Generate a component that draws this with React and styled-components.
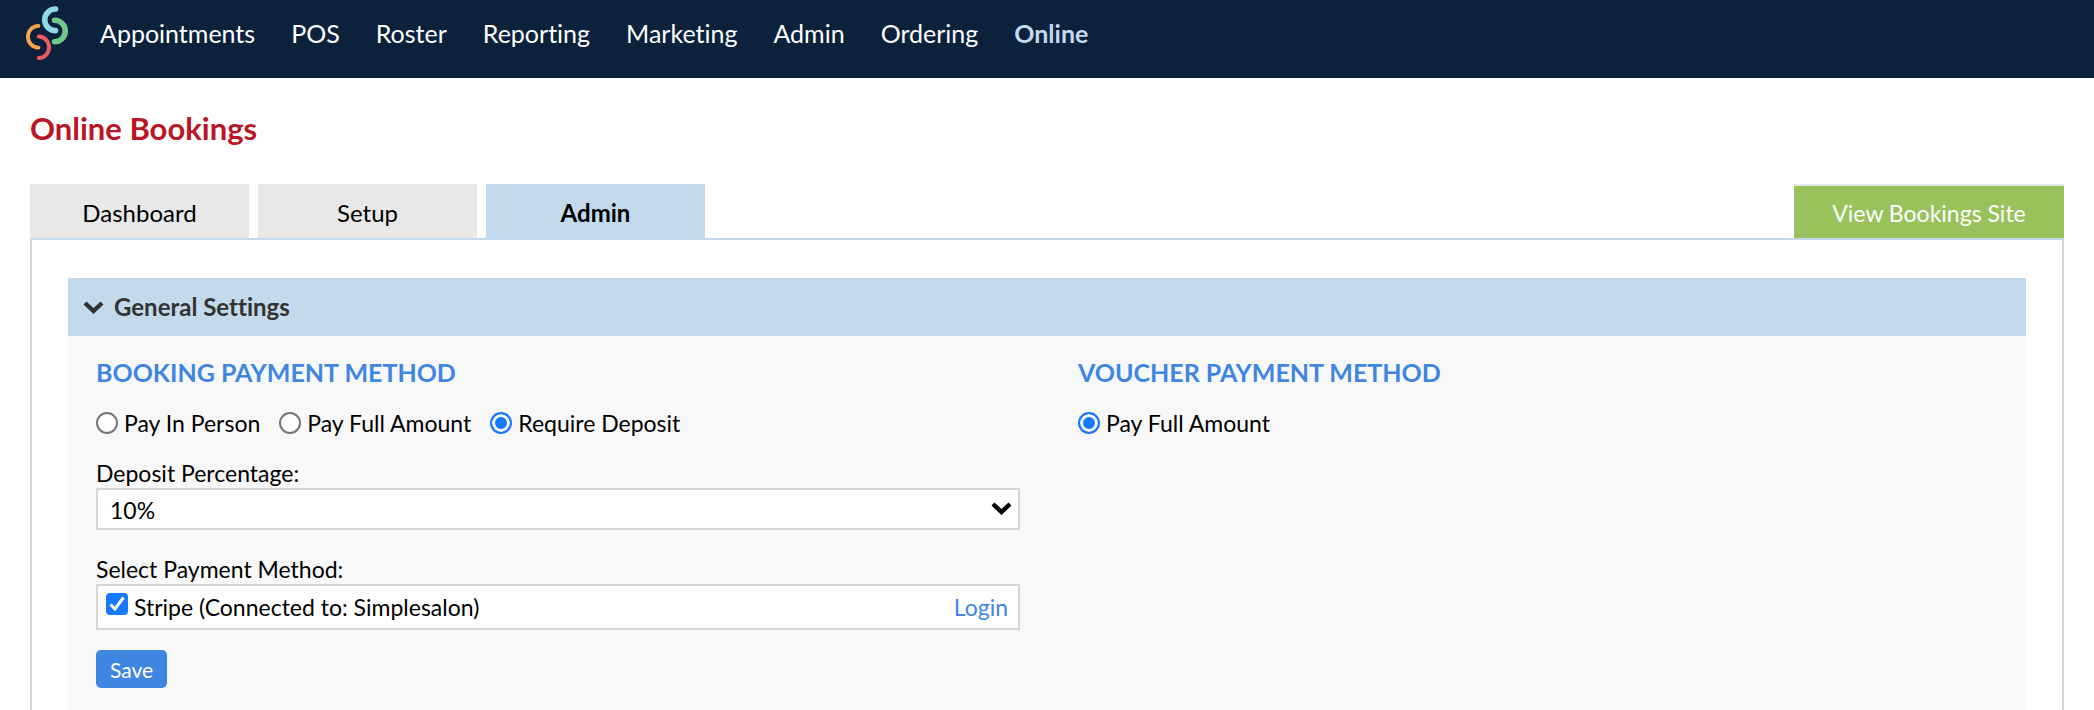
import React, { useState } from "react";
import styled, { createGlobalStyle } from "styled-components";

const GlobalStyle = createGlobalStyle`
  * {
    box-sizing: border-box;
  }
  body {
    margin: 0;
    background: #fff;
    color: #000;
    font-family: Lato, "Liberation Sans", sans-serif;
    font-size: 23px;
    font-variant-ligatures: none;
    line-height: 28px;
  }
`;

const Header = styled.header`
  display: flex;
  align-items: flex-start;
  gap: 31px;
  height: 78px;
  padding: 6px 26px;
  background: #0c223c;
`;

const LogoLink = styled.a`
  display: block;
  height: 54px;
`;

const Nav = styled.nav`
  display: flex;
  gap: 36px;
  padding-top: 11px;
`;

const NavLink = styled.a`
  color: ${({ $active }) => ($active ? "#c3daed" : "#fff")};
  font-size: 25px;
  font-weight: ${({ $active }) => ($active ? 700 : 400)};
  line-height: 32px;
  text-decoration: none;
`;

const Page = styled.main`
  padding: 30px 30px 0;
`;

const Title = styled.h1`
  margin: 0 0 36px;
  color: #bb1626;
  font-size: 31px;
  font-weight: 700;
  line-height: 40px;
`;

const TabBar = styled.div`
  display: flex;
  justify-content: space-between;
  border-bottom: 2px solid #c3daed;
`;

const Tabs = styled.div`
  display: flex;
  gap: 9px;
`;

const Tab = styled.button`
  width: 219px;
  height: 54px;
  padding: 4px 0 0;
  border: 0;
  background: ${({ $active }) => ($active ? "#c3daed" : "#e8e8e8")};
  color: #000;
  font: inherit;
  font-size: 24px;
  font-weight: ${({ $active }) => ($active ? 700 : 400)};
  cursor: pointer;
`;

const SiteLink = styled.a`
  width: 270px;
  height: 54px;
  padding-top: 13px;
  border-top: 2px solid #e8e8e8;
  background: #99c25d;
  color: #fff;
  text-align: center;
  text-decoration: none;
`;

const Panel = styled.div`
  padding: 38px 36px 0;
  border: 2px solid #d6d6d6;
  border-width: 0 2px;
`;

const SectionToggle = styled.button`
  display: flex;
  align-items: center;
  gap: 10px;
  width: 100%;
  height: 58px;
  padding: 0 15px;
  border: 0;
  background: #c3daed;
  color: #333;
  font: inherit;
  font-size: 24px;
  font-weight: 700;
  cursor: pointer;
`;

const SectionBody = styled.div`
  display: grid;
  grid-template-columns: 1fr 1fr;
  gap: 58px;
  min-height: 374px;
  padding: 19px 24px 22px 28px;
  background: #f8f8f8;
`;

const Heading = styled.h2`
  margin: 0 0 20px;
  color: #3f86e2;
  font-size: 25px;
  font-weight: 700;
  line-height: 34px;
  text-transform: uppercase;
`;

const RadioRow = styled.div`
  display: flex;
  gap: 19px;
  margin-bottom: 21px;
`;

const RadioLabel = styled.label`
  display: flex;
  align-items: center;
  gap: 6px;
`;

const Radio = styled.input`
  appearance: none;
  width: 22px;
  height: 22px;
  margin: 0;
  border: 2px solid #767676;
  border-radius: 50%;
  background: #fff;

  &:checked {
    border-color: #1679ff;
    background: #1679ff;
    box-shadow: inset 0 0 0 3px #fff;
  }
`;

const FieldLabel = styled.label`
  display: block;
  line-height: 30px;
`;

const SelectWrap = styled.div`
  position: relative;
  margin-bottom: 24px;
`;

const Select = styled.select`
  appearance: none;
  display: block;
  width: 100%;
  height: 42px;
  padding: 2px 40px 0 12px;
  border: 2px solid #d6d6d6;
  border-radius: 0;
  background: #fff;
  color: #000;
  font: inherit;
`;

const SelectArrow = styled.span`
  position: absolute;
  top: 14px;
  right: 8px;
  display: flex;
  pointer-events: none;
`;

const MethodBox = styled.div`
  display: flex;
  align-items: center;
  justify-content: space-between;
  height: 46px;
  margin-bottom: 20px;
  padding: 0 10px 0 8px;
  border: 2px solid #d6d6d6;
  background: #fff;
`;

const CheckLabel = styled.label`
  display: flex;
  align-items: flex-start;
  gap: 6px;
`;

const CheckWrap = styled.span`
  display: grid;
  width: 22px;
  height: 22px;

  > * {
    grid-area: 1 / 1;
  }
`;

const Checkbox = styled.input`
  appearance: none;
  width: 22px;
  height: 22px;
  margin: 0;
  border: 2px solid #767676;
  border-radius: 4px;
  background: #fff;

  &:checked {
    border-color: #1679ff;
    background: #1679ff;
  }
`;

const TextLink = styled.a`
  color: #3f86e2;
  text-decoration: none;
`;

const SaveButton = styled.button`
  display: block;
  height: 38px;
  padding: 2px 14px 0;
  border: 0;
  border-radius: 5px;
  background: #3f86e2;
  color: #fff;
  font: inherit;
  font-size: 21px;
  cursor: pointer;
`;

const navItems = [
  "Appointments",
  "POS",
  "Roster",
  "Reporting",
  "Marketing",
  "Admin",
  "Ordering",
  "Online",
];

const tabs = ["Dashboard", "Setup", "Admin"];

const bookingMethods = ["Pay In Person", "Pay Full Amount", "Require Deposit"];

const Logo = () => (
  <svg width="43" height="54" viewBox="0 0 43 54" fill="none" strokeLinecap="round">
    <path d="M29.5 3A10.8 10.8 0 0 0 29.5 24.6" stroke="#8ddae4" strokeWidth="5.6" />
    <path d="M28.5 14.2A10.8 10.8 0 0 1 28.5 35.8" stroke="#6fc88c" strokeWidth="5.6" />
    <path d="M12.5 19.8A10.6 10.9 0 0 0 12.5 41.6" stroke="#f9a650" strokeWidth="3.8" />
    <path d="M12.8 30.6A10.2 10.7 0 0 1 12.8 52" stroke="#ed5b61" strokeWidth="4" />
  </svg>
);

const Chevron = () => (
  <svg width="21" height="13" viewBox="0 0 21 13" fill="none">
    <path d="M2 2L10.5 10L19 2" stroke="currentColor" strokeWidth="4.4" />
  </svg>
);

const App = () => {
  const [activeTab, setActiveTab] = useState("Admin");
  const [open, setOpen] = useState(true);
  const [method, setMethod] = useState("Require Deposit");
  const [percentage, setPercentage] = useState("10%");
  const [stripe, setStripe] = useState(true);

  return (
    <>
      <GlobalStyle />
      <Header>
        <LogoLink href="#" aria-label="Home">
          <Logo />
        </LogoLink>
        <Nav>
          {navItems.map((item) => (
            <NavLink key={item} href="#" $active={item === "Online"}>
              {item}
            </NavLink>
          ))}
        </Nav>
      </Header>
      <Page>
        <Title>Online Bookings</Title>
        <TabBar>
          <Tabs>
            {tabs.map((tab) => (
              <Tab
                key={tab}
                type="button"
                $active={tab === activeTab}
                onClick={() => setActiveTab(tab)}
              >
                {tab}
              </Tab>
            ))}
          </Tabs>
          <SiteLink href="#">View Bookings Site</SiteLink>
        </TabBar>
        <Panel>
          <SectionToggle
            type="button"
            aria-expanded={open}
            onClick={() => setOpen(!open)}
          >
            <Chevron />
            General Settings
          </SectionToggle>
          {open && (
            <SectionBody>
              <form onSubmit={(event) => event.preventDefault()}>
                <Heading>Booking Payment Method</Heading>
                <RadioRow>
                  {bookingMethods.map((item) => (
                    <RadioLabel key={item}>
                      <Radio
                        type="radio"
                        name="booking"
                        checked={item === method}
                        onChange={() => setMethod(item)}
                      />
                      {item}
                    </RadioLabel>
                  ))}
                </RadioRow>
                <FieldLabel htmlFor="percentage">Deposit Percentage:</FieldLabel>
                <SelectWrap>
                  <Select
                    id="percentage"
                    value={percentage}
                    onChange={(event) => setPercentage(event.target.value)}
                  >
                    <option>10%</option>
                    <option>20%</option>
                    <option>50%</option>
                  </Select>
                  <SelectArrow>
                    <Chevron />
                  </SelectArrow>
                </SelectWrap>
                <FieldLabel htmlFor="stripe">Select Payment Method:</FieldLabel>
                <MethodBox>
                  <CheckLabel>
                    <CheckWrap>
                      <Checkbox
                        id="stripe"
                        type="checkbox"
                        checked={stripe}
                        onChange={() => setStripe(!stripe)}
                      />
                      {stripe && (
                        <svg width="22" height="22" viewBox="0 0 22 22" fill="none">
                          <path d="M4.5 11.5L9 16L17.5 4.5" stroke="#fff" strokeWidth="3" />
                        </svg>
                      )}
                    </CheckWrap>
                    Stripe (Connected to: Simplesalon)
                  </CheckLabel>
                  <TextLink href="#">Login</TextLink>
                </MethodBox>
                <SaveButton type="submit">Save</SaveButton>
              </form>
              <div>
                <Heading>Voucher Payment Method</Heading>
                <RadioRow>
                  <RadioLabel>
                    <Radio type="radio" name="voucher" defaultChecked />
                    Pay Full Amount
                  </RadioLabel>
                </RadioRow>
              </div>
            </SectionBody>
          )}
        </Panel>
      </Page>
    </>
  );
};

export default App;
